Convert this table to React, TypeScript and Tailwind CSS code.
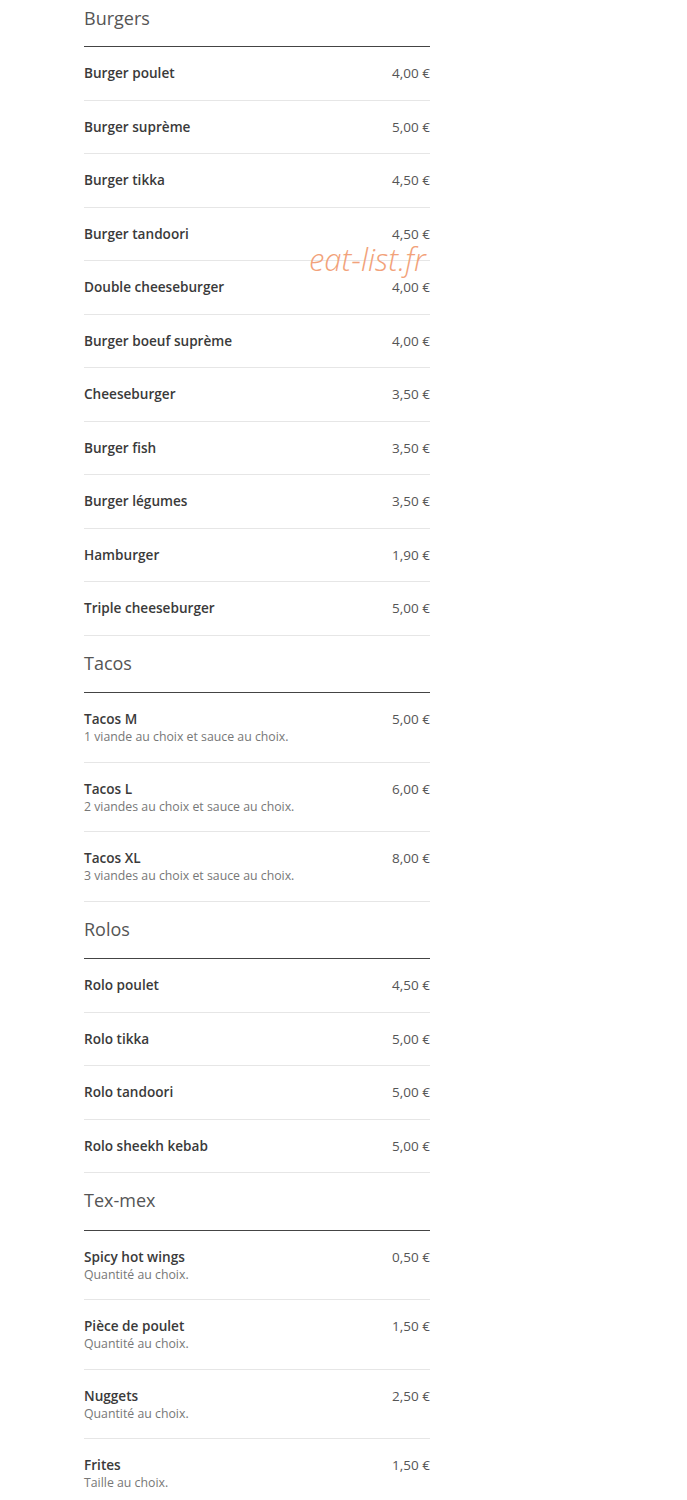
type Item = { name: string; price: string; desc?: string };

const sections: { title: string; items: Item[] }[] = [
  {
    title: "Burgers",
    items: [
      { name: "Burger poulet", price: "4,00 €" },
      { name: "Burger suprème", price: "5,00 €" },
      { name: "Burger tikka", price: "4,50 €" },
      { name: "Burger tandoori", price: "4,50 €" },
      { name: "Double cheeseburger", price: "4,00 €" },
      { name: "Burger boeuf suprème", price: "4,00 €" },
      { name: "Cheeseburger", price: "3,50 €" },
      { name: "Burger fish", price: "3,50 €" },
      { name: "Burger légumes", price: "3,50 €" },
      { name: "Hamburger", price: "1,90 €" },
      { name: "Triple cheeseburger", price: "5,00 €" },
    ],
  },
  {
    title: "Tacos",
    items: [
      { name: "Tacos M", price: "5,00 €", desc: "1 viande au choix et sauce au choix." },
      { name: "Tacos L", price: "6,00 €", desc: "2 viandes au choix et sauce au choix." },
      { name: "Tacos XL", price: "8,00 €", desc: "3 viandes au choix et sauce au choix." },
    ],
  },
  {
    title: "Rolos",
    items: [
      { name: "Rolo poulet", price: "4,50 €" },
      { name: "Rolo tikka", price: "5,00 €" },
      { name: "Rolo tandoori", price: "5,00 €" },
      { name: "Rolo sheekh kebab", price: "5,00 €" },
    ],
  },
  {
    title: "Tex-mex",
    items: [
      { name: "Spicy hot wings", price: "0,50 €", desc: "Quantité au choix." },
      { name: "Pièce de poulet", price: "1,50 €", desc: "Quantité au choix." },
      { name: "Nuggets", price: "2,50 €", desc: "Quantité au choix." },
      { name: "Frites", price: "1,50 €", desc: "Taille au choix." },
    ],
  },
];

function MenuRow({ item }: { item: Item }) {
  if (item.desc) {
    return (
      <div className="flex justify-between border-b border-[#e6e6e6] pt-[17px] pb-[15.5px]">
        <div>
          <p className="text-[13.6px] leading-[18px] font-semibold text-[#3a3a3a]">{item.name}</p>
          <p className="text-[12.3px] leading-[18px] text-[#777]">{item.desc}</p>
        </div>
        <span className="text-[13.5px] leading-[18px] text-[#555]">{item.price}</span>
      </div>
    );
  }
  return (
    <div className="flex h-[53.5px] items-center justify-between border-b border-[#e6e6e6]">
      <span className="text-[13.6px] leading-5 font-semibold text-[#3a3a3a]">{item.name}</span>
      <span className="text-[13.5px] leading-5 text-[#555]">{item.price}</span>
    </div>
  );
}

export default function App() {
  return (
    <div className="relative min-h-[1500px] bg-white font-['Open_Sans',sans-serif]">
      <div className="ml-[84px] w-[346px]">
        {sections.map((section, i) => (
          <section key={section.title}>
            <h2
              className={
                (i === 0 ? "pt-[8px] pb-[18px] " : "pt-[17px] pb-[19.5px] ") +
                "border-b border-[#444] text-[18px] leading-5 text-[#555]"
              }
            >
              {section.title}
            </h2>
            {section.items.map((item) => (
              <MenuRow key={item.name} item={item} />
            ))}
          </section>
        ))}
      </div>

      {/* watermark */}
      <span className="absolute left-[309px] top-[247px] text-[31px] italic font-light text-[#f2a27a] leading-[24px]">
        eat-list.fr
      </span>
    </div>
  );
}
